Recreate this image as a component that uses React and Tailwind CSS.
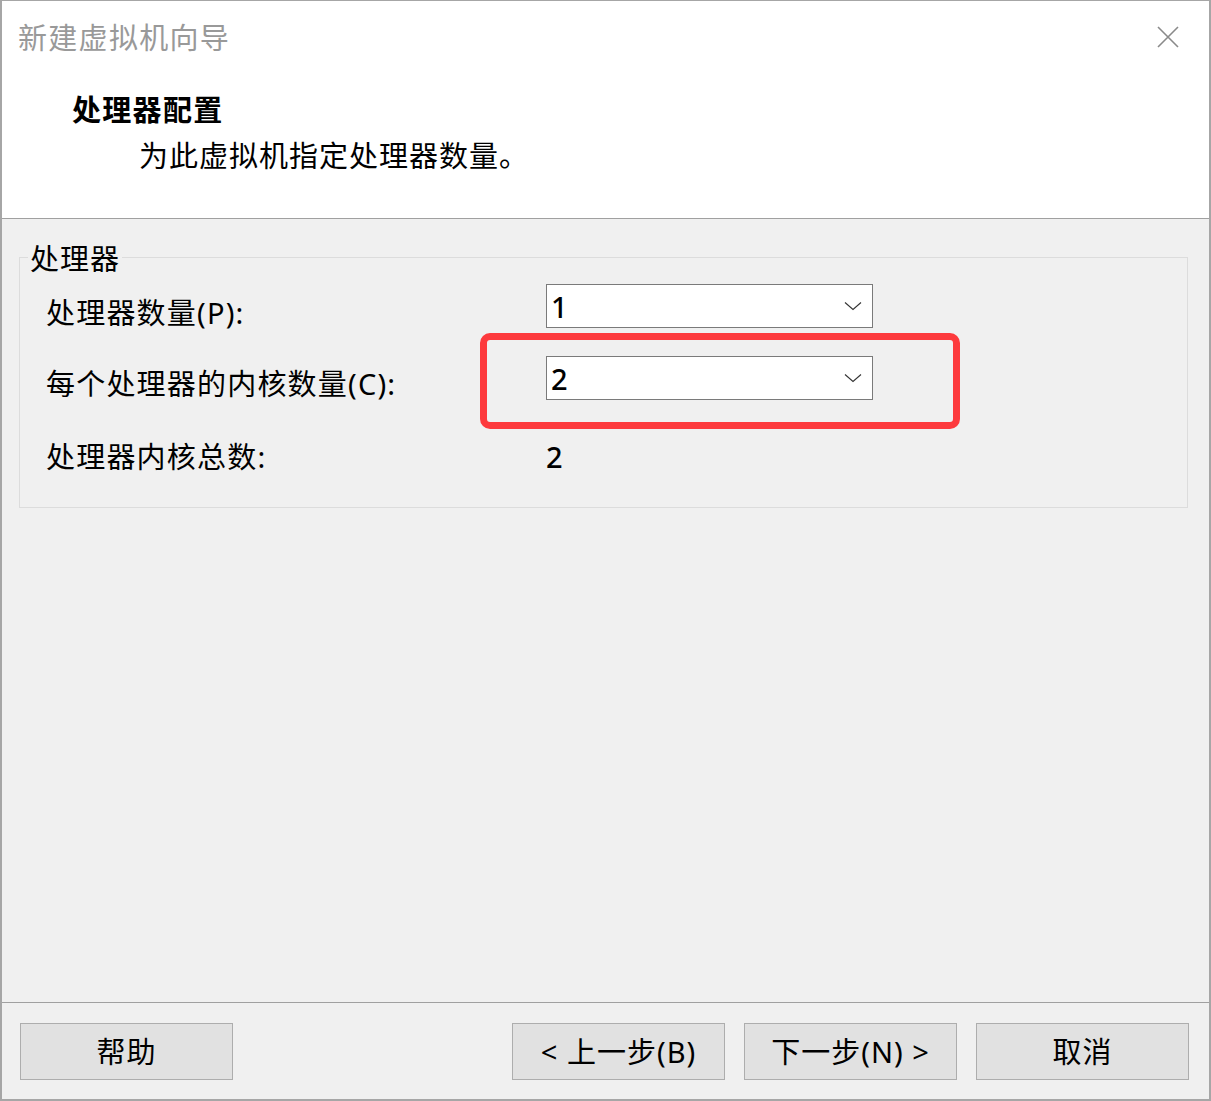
import React from 'react';

const font = "font-['Noto_Sans','Noto_Sans_CJK_SC',sans-serif]";

const Combo = ({ value }) => (
    <div className="w-[327px] h-[44px] bg-white border border-[#7a7a7a] flex items-center justify-between pl-[4px] pr-[10px]">
        <span className="text-[29px] leading-none font-medium text-black">{value}</span>
        <svg width="18" height="10" viewBox="0 0 18 10" fill="none">
            <path d="M1 1.5 L9 8.5 L17 1.5" stroke="#333" strokeWidth="1.1" />
        </svg>
    </div>
);

const Button = ({ children }) => (
    <button className="w-[213px] h-[57px] bg-[#e1e1e1] border border-[#adadad] text-[29px] leading-none text-black tracking-[1px] flex items-center justify-center">
        {children}
    </button>
);

const App = () => {
    return (
        <div className={`${font} w-[1211px] h-[1101px] bg-[#f0f0f0] flex flex-col border-t border-l-2 border-r-2 border-b-2 border-[#a6a6a6] overflow-hidden`}>
            {/* Header */}
            <div className="bg-white h-[217px] flex flex-col">
                <div className="h-[72px] flex items-center justify-between pl-[16px] pr-[30px]">
                    <span className="text-[29px] leading-none text-[#999999] tracking-[1.3px]">新建虚拟机向导</span>
                    <svg width="22" height="22" viewBox="0 0 22 22" fill="none">
                        <path d="M1 1 L21 21 M21 1 L1 21" stroke="#8a8a8a" strokeWidth="1.6" />
                    </svg>
                </div>
                <div className="pl-[70px] pt-[22px] text-[29px] leading-none font-bold text-black tracking-[1.3px]">处理器配置</div>
                <div className="pl-[137px] pt-[17px] text-[29px] leading-none text-black tracking-[1px]">为此虚拟机指定处理器数量。</div>
            </div>
            <div className="h-px bg-[#a0a0a0]" />

            {/* Body */}
            <div className="flex-1 flex flex-col pt-[38px] pl-[17px]">
                <div className="relative w-[1169px] h-[251px] border border-[#dcdcdc] pl-[26px] pt-[26px]">
                    <span className="absolute left-[8px] top-[-14px] bg-[#f0f0f0] px-[2px] text-[29px] leading-none text-black tracking-[1px]">处理器</span>

                    <div className="flex">
                        <span className="w-[500px] mt-[14px] text-[29px] leading-none text-black tracking-[1.2px]">处理器数量(P):</span>
                        <Combo value="1" />
                    </div>
                    <div className="flex mt-[28px]">
                        <span className="w-[500px] mt-[13px] text-[29px] leading-none text-black tracking-[1.2px]">每个处理器的内核数量(C):</span>
                        <Combo value="2" />
                    </div>
                    <div className="flex mt-[42px]">
                        <span className="w-[500px] text-[29px] leading-none text-black tracking-[1.2px]">处理器内核总数:</span>
                        <span className="text-[29px] leading-none font-medium text-black">2</span>
                    </div>

                    {/* Highlight annotation */}
                    <div className="absolute left-[460px] top-[75px] w-[480px] h-[96px] border-[7px] border-[#fd3a3d] rounded-[10px]" />
                </div>
            </div>

            {/* Footer */}
            <div className="h-px bg-[#a0a0a0]" />
            <div className="h-[96px] flex items-start pt-[20px] pl-[18px]">
                <Button>帮助</Button>
                <div className="flex gap-[19px] ml-[279px]">
                    <Button>&lt; 上一步(B)</Button>
                    <Button>下一步(N) &gt;</Button>
                    <Button>取消</Button>
                </div>
            </div>
        </div>
    );
};

export default App;
